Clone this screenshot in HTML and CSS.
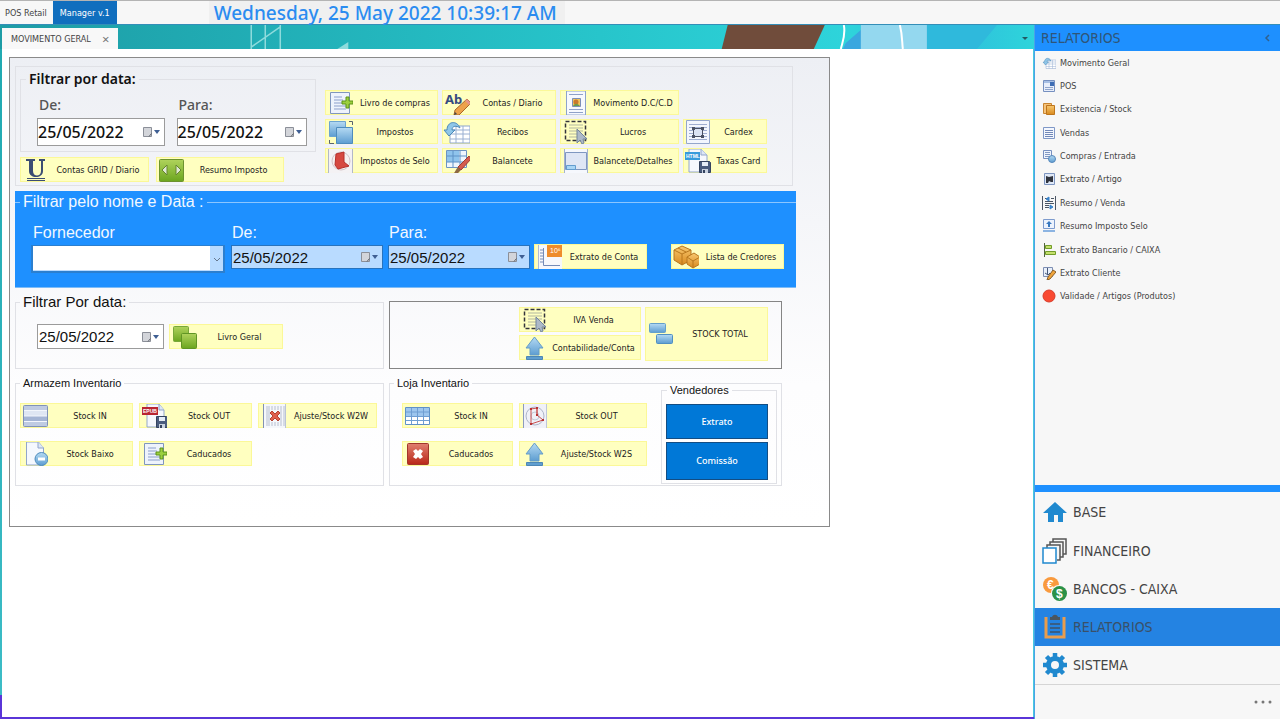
FILE: index.html
```html
<!DOCTYPE html>
<html lang="pt">
<head>
<meta charset="utf-8">
<title>Manager v.1 - Movimento Geral</title>
<link rel="stylesheet" href="styles.css">
</head>
<body>
<svg class="defs" aria-hidden="true">
  <defs>
    <linearGradient id="blue" x1="0" y1="0" x2="0" y2="1"><stop offset="0" stop-color="#b5daf3"/><stop offset="1" stop-color="#5d9dd1"/></linearGradient>
    <linearGradient id="green" x1="0" y1="0" x2="0" y2="1"><stop offset="0" stop-color="#b0d35c"/><stop offset="1" stop-color="#6ba51f"/></linearGradient>
    <linearGradient id="red" x1="0" y1="0" x2="0" y2="1"><stop offset="0" stop-color="#e0806f"/><stop offset="1" stop-color="#b92718"/></linearGradient>
    <linearGradient id="gold" x1="0" y1="0" x2="0" y2="1"><stop offset="0" stop-color="#f8c870"/><stop offset="1" stop-color="#d98a1e"/></linearGradient>
    <symbol id="calendar" viewBox="0 0 18 12"><path d="M1.500 1.500h8v9h-8z" fill="#d3d5da" stroke="#8b8f98"/><path d="M9.500 7.500L7 10.500" fill="none" stroke="#5f636b"/><path d="M12 4h6l-3 4z" fill="#3f5f93"/></symbol>
    <symbol id="docplus" viewBox="0 0 28 24"><path d="M5.500 1.500h19v21h-19z" fill="#eef3fc" stroke="#8096bd"/><path d="M9 6h8M9 9h9M9 12h9M9 15h12M9 18h12" stroke="#8c9fcb"/><path d="M21 6h3v4h4v3h-4v4h-3v-4h-4v-3h4z" fill="#9bcf3e" stroke="#5c9319"/></symbol>
    <symbol id="squares" viewBox="0 0 28 24"><path d="M4.500 1.500h16v15h-16z" fill="url(#blue)" stroke="#6ba4d0"/><path d="M11.500 7.500h16v16h-16z" fill="url(#blue)" stroke="#4e8cbe"/><path d="M24 1.500h3.500V5M4.500 20v3.500H9" fill="none" stroke="#59636f"/></symbol>
    <symbol id="redflag" viewBox="0 0 28 24"><path d="M3 0h25v24H3z" fill="#f4f2f4"/><path d="M3.500 0v24M27.500 0v24" stroke="#b2b8c8"/><circle cx="16" cy="12" r="9" fill="#f5efef" stroke="#d3c3c8"/><path d="M11 5l8-2v10l5 4-11 3-3-4z" fill="#d64840" stroke="#b52f2b"/></symbol>
    <symbol id="abpencil" viewBox="0 0 28 24"><text x="3" y="13" class="ab">Ab</text><path d="M25 8l4 4-12 12-5 0 1-5z" fill="#eda24b" stroke="#a9672a"/><path d="M25 8l4 4-2 2-4-4z" fill="#e4948a"/><path d="M12 24l1-3 2 2z" fill="#444"/></symbol>
    <symbol id="gridback" viewBox="0 0 28 24"><path d="M8 6h20v17H8z" fill="#fff" stroke="#8da5cc"/><path d="M8 10h20M8 14h20M8 19h20M14 6v17M21 6v17" stroke="#9ab0d2"/><path d="M18 8C15 0 5 1 5 10H2l5 6 6-6h-3c0-4 4-5 8-2z" fill="#8fc6e8" stroke="#4b88b8"/></symbol>
    <symbol id="gridbrush" viewBox="0 0 28 24"><path d="M4.500 1.500h20v17h-20z" fill="#eff6fd" stroke="#6c94c2"/><path d="M5 2h12v11H5z" fill="#8fc4ec"/><path d="M5 7h19M5 13h19M11 2v16M18 2v16" stroke="#5e92c6"/><path d="M27 7l2 3-10 11-3-3z" fill="#d45b4e" stroke="#a33a31"/><path d="M16 18l3 3-3 3h-4c1-1 2-4 4-6z" fill="#8c6844"/></symbol>
    <symbol id="docpic" viewBox="0 0 28 24"><path d="M6.500 0v24h19V0z" fill="#f7f9fe" stroke="#8da3cc"/><path d="M9 3.500h14M9 18.500h14M9 21.500h14" stroke="#8fa1c8"/><path d="M12.500 7.500h8v8h-8z" fill="#f0c45d" stroke="#7d8fb7"/><circle cx="16" cy="11" r="2.500" fill="#c9782c"/><path d="M13 15c2-3 4-3 7 0z" fill="#6a9a4f"/></symbol>
    <symbol id="select" viewBox="0 0 28 24"><path d="M9 5h14M9 8h14M9 11h14M9 14h9M9 17h9" stroke="#b2b79f"/><path d="M5.500 1.500h20v19h-20z" fill="none" stroke="#34343c" stroke-width="1.500" stroke-dasharray="4 2"/><path d="M17 9v14l3-3 2 4 2-1-1-4h4z" fill="#adb9c8" stroke="#73859b"/></symbol>
    <symbol id="window" viewBox="0 0 28 24"><path d="M4 0h24v24H4z" fill="#f6f8fd"/><path d="M5.500 3.500h21v17h-21z" fill="#dfe6f5" stroke="#7f97c0"/><path d="M6.500 16.500h9v4h-9z" fill="#a9d5f5" stroke="#639cce"/><path d="M4.500 0v24M27.500 0v24" stroke="#a3b2d0"/></symbol>
    <symbol id="frame" viewBox="0 0 28 24"><path d="M3.500.500h23v23h-23z" fill="#f3f6fd" stroke="#94a6cb"/><path d="M6 4.500h18M6 7.500h18M6 10.500h18M6 13.500h18M6 16.500h18M6 19.500h18" stroke="#9fadd0"/><path d="M10.500 8.500h9v8h-9z" fill="#dae2f3" stroke="#4a5164"/><path d="M9 7h3v3H9zM18 7h3v3h-3zM9 15h3v3H9zM18 15h3v3h-3z" fill="#4a5164"/></symbol>
    <symbol id="disk" viewBox="0 0 12 12"><path d="M.500.500h10l1 1v10H.500z" fill="#4a5c7e" stroke="#34435f"/><path d="M3 1h6v4H3z" fill="#e6edf7"/><path d="M3 8h6v4H3z" fill="#c9d2e0"/><path d="M4 9h2v3H4z" fill="#34435f"/></symbol>
    <symbol id="htmldisk" viewBox="0 0 28 24"><path d="M6 0h12l6 6v17H6z" fill="#f6f8fd" stroke="#93a7cb"/><path d="M18 0v6h6" fill="#dbe6f6" stroke="#93a7cb"/><path d="M2 3h15v8H2z" fill="#379bdc"/><text x="3" y="9" class="tag">HTML</text><use href="#disk" x="16" y="12" width="12" height="12"/></symbol>
    <symbol id="epubdisk" viewBox="0 0 28 24"><path d="M8 0h12l5 6v17H8z" fill="#f6f8fd" stroke="#93a7cb"/><path d="M20 0v6h5" fill="#dbe6f6" stroke="#93a7cb"/><path d="M3 3h16v8H3z" fill="#b92632"/><text x="4" y="9" class="tag">EPUB</text><use href="#disk" x="17" y="12" width="12" height="12"/></symbol>
    <symbol id="underline" viewBox="0 0 28 24"><path d="M6 1h9v2h-2v10c0 6 8 6 8 0V3h-2V1h6v2h-2v10c0 8-14 8-14 0V3H6z" fill="#3c4d73"/><path d="M7 20.500h18M7 22.500h18" stroke="#3c4d73"/></symbol>
    <symbol id="greenarrows" viewBox="0 0 28 24"><rect x="3.500" y="1.500" width="24" height="22" rx="1" fill="url(#green)" stroke="#6d922f"/><path d="M11 7v10l-5-5zM20 7v10l5-5z" fill="#dfe9d2" stroke="#66852f"/></symbol>
    <symbol id="chart" viewBox="0 0 28 24"><path d="M4 0h25v24H4z" fill="#f6f7fb"/><path d="M4.500 0v24" stroke="#aebbd5"/><path d="M9.500 3v17.500H26M6 5h4M6 8h4M6 11h4M6 14h4M6 17h4" fill="none" stroke="#758bb8"/><path d="M13 0h16v12H13z" fill="#ee8c2c"/><text x="16" y="8" class="ten">10⁶</text></symbol>
    <symbol id="boxes" viewBox="0 0 28 24"><path d="M3 5l8-4 9 4v10l-9 5-8-5z" fill="url(#gold)" stroke="#b8771d"/><path d="M3 5l8 4 9-4M11 9v11M7 3l8 4" fill="none" stroke="#b8771d"/><path d="M16 12l7-4 6 4v7l-7 4-6-4z" fill="url(#gold)" stroke="#b8771d"/><path d="M16 12l6 4 7-4M22 16v7" fill="none" stroke="#b8771d"/></symbol>
    <symbol id="greensquares" viewBox="0 0 28 24"><rect x="4.500" y="1.500" width="15" height="15" rx="1" fill="url(#green)" stroke="#78a83a"/><rect x="12.500" y="8.500" width="15" height="15" rx="1" fill="url(#green)" stroke="#609524"/></symbol>
    <symbol id="up" viewBox="0 0 28 24"><path d="M15.500 1l8.500 11h-4v7h-9v-7H7z" fill="url(#blue)" stroke="#659dc8"/><path d="M7.500 20.500h16v3h-16z" fill="#5f9ed0" stroke="#4d87b5"/></symbol>
    <symbol id="stocks" viewBox="0 0 28 24"><rect x="4.500" y="1.500" width="16" height="9" rx="1" fill="url(#blue)" stroke="#64a0cb"/><rect x="11.500" y="12.500" width="16" height="9" rx="1" fill="url(#blue)" stroke="#5090c2"/></symbol>
    <symbol id="rows" viewBox="0 0 28 24"><rect x="3.500" y="1.500" width="24" height="21" rx="1" fill="#bfcbe2" stroke="#8092b9"/><path d="M4 7h23v5H4z" fill="#dfe6f3"/><path d="M4 12h23v5H4z" fill="#a5b5d5"/><path d="M4 6.500h23M4 12h23M4 17.500h23" stroke="#f3f6fc"/></symbol>
    <symbol id="barcode" viewBox="0 0 28 24"><path d="M5 0h24v24H5z" fill="#f5f7fb"/><path d="M5.500 0v24M28 0v24" stroke="#8190b3"/><path d="M9 2v20M11 2v20M14 2v4M14 18v4M17 2v4M17 18v4M20 2v4M20 18v4M23 2v20M26 2v20" stroke="#b7bfd0"/><path d="M12 9l2-2 3 3 3-3 2 2-3 3 3 3-2 2-3-3-3 3-2-2 3-3z" fill="#df5f4d" stroke="#b84232"/></symbol>
    <symbol id="docminus" viewBox="0 0 28 24"><path d="M6.500 0h12l5 6v17h-17z" fill="#f5f8fe" stroke="#91a5cb"/><path d="M18 0v6h6" fill="#dde7f6" stroke="#91a5cb"/><circle cx="21.500" cy="17" r="6.500" fill="url(#blue)" stroke="#4e8cbd"/><path d="M18 15.500h7v3h-7z" fill="#fff"/></symbol>
    <symbol id="table" viewBox="0 0 28 24"><path d="M3.500 3.500h24v17h-24z" fill="#fff" stroke="#5f91c8"/><path d="M4 4h23v9H4z" fill="#9dc6ee"/><path d="M4 8h23M4 12.500h23M4 16.500h23M9.500 4v16M15.500 4v16M21.500 4v16" stroke="#6f9ed2"/></symbol>
    <symbol id="shape" viewBox="0 0 28 24"><path d="M4 0h25v24H4z" fill="#f0f1f8"/><path d="M4.500 0v24M28 0v24" stroke="#8c9abe"/><circle cx="16" cy="12" r="9" fill="none" stroke="#aeb6c9"/><circle cx="16" cy="12" r="4" fill="none" stroke="#c3cad8"/><path d="M12 5l6-1v7l6 5-12 4zM18 4v7" fill="none" stroke="#c95050"/><path d="M11 4h2v2h-2zM17 3h2v2h-2zM23 15h2v2h-2zM11 19h2v2h-2zM17 10h2v2h-2z" fill="#b83333"/></symbol>
    <symbol id="redx" viewBox="0 0 28 24"><rect x="5.500" y="1.500" width="21" height="21" rx="1" fill="url(#red)" stroke="#a1362b"/><path d="M11 9l3-2 2 2 2-2 3 2-2 3 2 3-3 2-2-2-2 2-3-2 2-3z" fill="#fff"/></symbol>
    <symbol id="s-pos" viewBox="0 0 14 14"><path d="M1.500 1.500h11v11h-11z" fill="#e8eefa" stroke="#7690c0"/><path d="M2 2h10v2H2z" fill="#a7bfe4"/><path d="M8 3h4v4H8z" fill="#3e6db5"/><path d="M3 8.500h8M3 10.500h8" stroke="#90a5cc"/></symbol>
    <symbol id="s-stock" viewBox="0 0 14 14"><path d="M1.500 1.500h8v10h-8z" fill="#f5c37b" stroke="#c98530"/><path d="M4.500 3.500h8v9h-8z" fill="url(#gold)" stroke="#bd751c"/></symbol>
    <symbol id="s-list" viewBox="0 0 14 14"><path d="M1.500 1.500h11v11h-11z" fill="#f4f7fe" stroke="#7f98c7"/><path d="M3 4.500h8M3 6.500h8M3 8.500h8M3 10.500h8" stroke="#7289b8"/></symbol>
    <symbol id="s-buy" viewBox="0 0 14 14"><path d="M1.500 1.500h8v8h-8z" fill="#eff4fd" stroke="#7890c0"/><path d="M3 3.500h5M3 5.500h5M3 7.500h5" stroke="#8299c4"/><circle cx="10" cy="10" r="3.500" fill="url(#blue)" stroke="#5687bb"/></symbol>
    <symbol id="s-item" viewBox="0 0 14 14"><path d="M2.500 1.500h10v11h-10z" fill="#dfe8f7" stroke="#7d95c0"/><path d="M4 4l3 1 4-1v6H9L7 9l-1 2H4z" fill="#30343e"/></symbol>
    <symbol id="s-resume" viewBox="0 0 14 14"><path d="M.500 0v14M13.500 0v14M3 2.500h3M9 2.500h3M3 5.500h8M3 7.500h9M3 9.500h4M3 11.500h4" stroke="#4b5564"/><path d="M4 3l3-2v4zM11 11l-3-2v4z" fill="#3a83ca" stroke="#3a83ca"/></symbol>
    <symbol id="s-tax" viewBox="0 0 14 14"><path d="M1.500.500h11v9h-11z" fill="#edf3fd" stroke="#7d9bcd"/><path d="M7 2l3 3H8v3H6V5H4z" fill="#3878bf"/><path d="M1 11h12v2H1z" fill="#8cb4e2"/></symbol>
    <symbol id="s-bank" viewBox="0 0 14 14"><path d="M2.500 0v14" stroke="#52653d"/><path d="M3.500 2.500h6v3h-6zM3.500 8.500h10v3h-10z" fill="#c4df6c" stroke="#729c29"/></symbol>
    <symbol id="s-client" viewBox="0 0 14 14"><path d="M1.500 1.500h9v9h-9z" fill="#e8effa" stroke="#7d8eb3"/><path d="M3 7l3 2 2-2M5.500 2v7" stroke="#475979" fill="none"/><path d="M11 4l3 2-6 7-3 1 1-3z" fill="#f0a43b" stroke="#875f2a"/></symbol>
    <symbol id="s-red" viewBox="0 0 14 14"><circle cx="7" cy="7" r="6" fill="#f94a32" stroke="#d83c2a"/></symbol>
    <symbol id="n-home" viewBox="0 0 26 26"><path d="M13 3l12 11h-4v9h-5v-7h-4v7H6v-9H1z" fill="#2089cf"/></symbol>
    <symbol id="n-pages" viewBox="0 0 26 26"><path d="M11 4V1h13v15h-3M8 7V4h13v15h-3M5 10V7h13v15h-3" fill="none" stroke="#555" stroke-width="1.500"/><path d="M1 10h13v15H1z" fill="#fff" stroke="#2089cf" stroke-width="1.500"/></symbol>
    <symbol id="n-coins" viewBox="0 0 26 26"><circle cx="9" cy="9" r="8" fill="#f99a3e"/><circle cx="17" cy="17" r="8" fill="#f7f7f7"/><circle cx="17.500" cy="17.500" r="7.500" fill="#2b9147"/><text x="5" y="13" class="coin">€</text><text x="14" y="22" class="coin">$</text></symbol>
    <symbol id="n-board" viewBox="0 0 26 26"><path d="M4 3v20h18V3" fill="none" stroke="#e99d4d" stroke-width="3"/><path d="M8 6V3h2c1-3 5-3 6 0h2v3z" fill="#4b5660"/><path d="M8 10h10M8 14h10M8 18h10" stroke="#3f5368" stroke-width="1.500"/></symbol>
    <symbol id="n-gear" viewBox="0 0 26 26"><circle cx="13" cy="13" r="6.500" fill="none" stroke="#2089cf" stroke-width="5"/><path d="M13 1v5M13 20v5M1 13h5M20 13h5M4.500 4.500L8 8M18 18l3.500 3.500M4.500 21.500L8 18M18 8l3.500-3.500" stroke="#2089cf" stroke-width="4.500"/></symbol>
  </defs>
</svg>

<header class="topbar">
  <button class="app-tab">POS Retail</button>
  <button class="app-tab app-tab-active">Manager v.1</button>
  <time class="clock">Wednesday, 25 May 2022 10:39:17 AM</time>
</header>

<div class="shell">
  <main class="workspace">
    <div class="tabstrip">
      <svg class="wallpaper" viewBox="0 0 1033 24" preserveAspectRatio="xMidYMid slice" aria-hidden="true">
        <path d="M251 0v24M265 0v24M280 0v24M251 22l29-20" stroke="#8edbdc" stroke-width="1.500" fill="none"/>
        <path d="M337 24l11-7v7z" fill="#8edbdc"/>
        <path d="M727 0h97l-11 24h-92z" fill="#704c3b"/>
        <path d="M842 24l3-6 15-13v-5h66v24z" fill="#3aa7df"/>
        <path d="M926 0h70l-20 24h-50z" fill="#2fb9dc"/>
        <path d="M860 0h66v24h-66z" fill="#94d8ef"/>
        <path d="M843 0c2 10-1 16-3 24M899 0c3 12 2 18 3 24" stroke="#fff" stroke-width="2" fill="none"/>
      </svg>
      <div class="doc-tab"><span>MOVIMENTO GERAL</span><button class="close" aria-label="Fechar">×</button></div>
      <button class="tab-menu" aria-label="Lista de separadores"><svg viewBox="0 0 6 4"><path d="M0 0h6L3 3z" fill="#235a63"/></svg></button>
    </div>
    <div class="document">
      <div class="panel">

        <section class="group top-group">
          <div class="top-left">
            <fieldset class="group date-filter">
              <legend>Filtrar por data:</legend>
              <div class="date-pair">
                <div class="field"><label for="d1">De:</label><span class="date"><input id="d1" value="25/05/2022"><svg class="cal"><use href="#calendar"/></svg></span></div>
                <div class="field"><label for="d2">Para:</label><span class="date"><input id="d2" value="25/05/2022"><svg class="cal"><use href="#calendar"/></svg></span></div>
              </div>
            </fieldset>
            <div class="under-filter">
              <button class="tool"><svg><use href="#underline"/></svg><span>Contas GRID / Diario</span></button>
              <button class="tool"><svg><use href="#greenarrows"/></svg><span>Resumo Imposto</span></button>
            </div>
          </div>
          <div class="report-grid">
            <button class="tool"><svg><use href="#docplus"/></svg><span>Livro de compras</span></button>
            <button class="tool"><svg><use href="#abpencil"/></svg><span>Contas / Diario</span></button>
            <button class="tool"><svg><use href="#docpic"/></svg><span>Movimento D.C/C.D</span></button>
            <span></span>
            <button class="tool"><svg><use href="#squares"/></svg><span>Impostos</span></button>
            <button class="tool"><svg><use href="#gridback"/></svg><span>Recibos</span></button>
            <button class="tool"><svg><use href="#select"/></svg><span>Lucros</span></button>
            <button class="tool"><svg><use href="#frame"/></svg><span>Cardex</span></button>
            <button class="tool"><svg><use href="#redflag"/></svg><span>Impostos de Selo</span></button>
            <button class="tool"><svg><use href="#gridbrush"/></svg><span>Balancete</span></button>
            <button class="tool"><svg><use href="#window"/></svg><span>Balancete/Detalhes</span></button>
            <button class="tool"><svg><use href="#htmldisk"/></svg><span>Taxas Card</span></button>
          </div>
        </section>

        <div class="supplier-band">
          <fieldset class="group supplier">
            <legend>Filtrar pelo nome e Data :</legend>
            <div class="supplier-row">
              <div class="field combo-field"><label for="sup">Fornecedor</label><span class="combo"><select id="sup"><option></option></select><svg viewBox="0 0 8 6"><path d="M1 1l3 3 3-3" fill="none" stroke="#66788f"/></svg></span></div>
              <div class="field"><label for="d3">De:</label><span class="date"><input id="d3" value="25/05/2022"><svg class="cal"><use href="#calendar"/></svg></span></div>
              <div class="field para"><label for="d4">Para:</label><span class="date"><input id="d4" value="25/05/2022"><svg class="cal"><use href="#calendar"/></svg></span></div>
              <button class="tool"><svg><use href="#chart"/></svg><span>Extrato de Conta</span></button>
              <button class="tool creditors"><svg><use href="#boxes"/></svg><span>Lista de Credores</span></button>
            </div>
          </fieldset>
        </div>

        <div class="halves middle">
          <fieldset class="group ledger">
            <legend>Filtrar Por data:</legend>
            <div class="ledger-row">
              <span class="date"><input aria-label="Data" value="25/05/2022"><svg class="cal"><use href="#calendar"/></svg></span>
              <button class="tool"><svg><use href="#greensquares"/></svg><span>Livro Geral</span></button>
            </div>
          </fieldset>
          <section class="totals">
            <div class="totals-stack">
              <button class="tool"><svg><use href="#select"/></svg><span>IVA Venda</span></button>
              <button class="tool"><svg><use href="#up"/></svg><span>Contabilidade/Conta</span></button>
            </div>
            <button class="tool tall"><svg><use href="#stocks"/></svg><span>STOCK TOTAL</span></button>
          </section>
        </div>

        <div class="halves stock">
          <fieldset class="group warehouse">
            <legend>Armazem Inventario</legend>
            <div class="warehouse-grid">
              <button class="tool"><svg><use href="#rows"/></svg><span>Stock IN</span></button>
              <button class="tool"><svg><use href="#epubdisk"/></svg><span>Stock OUT</span></button>
              <button class="tool"><svg><use href="#barcode"/></svg><span>Ajuste/Stock W2W</span></button>
              <button class="tool"><svg><use href="#docminus"/></svg><span>Stock Baixo</span></button>
              <button class="tool"><svg><use href="#docplus"/></svg><span>Caducados</span></button>
            </div>
          </fieldset>
          <fieldset class="group shop">
            <legend>Loja Inventario</legend>
            <div class="shop-row">
              <div class="shop-grid">
                <button class="tool"><svg><use href="#table"/></svg><span>Stock IN</span></button>
                <button class="tool"><svg><use href="#shape"/></svg><span>Stock OUT</span></button>
                <button class="tool"><svg><use href="#redx"/></svg><span>Caducados</span></button>
                <button class="tool"><svg><use href="#up"/></svg><span>Ajuste/Stock W2S</span></button>
              </div>
              <fieldset class="group sellers">
                <legend>Vendedores</legend>
                <button class="primary">Extrato</button>
                <button class="primary">Comissão</button>
              </fieldset>
            </div>
          </fieldset>
        </div>
      </div>
    </div>
  </main>

  <aside class="sidebar">
    <div class="side-head"><h2>RELATORIOS</h2><button aria-label="Recolher"><svg viewBox="0 0 6 8"><path d="M5 1L2 4l3 3" fill="none" stroke="#30618f" stroke-width="1.500"/></svg></button></div>
    <ul class="reports">
      <li><a href="#"><svg viewBox="0 0 28 24"><use href="#gridback"/></svg>Movimento Geral</a></li>
      <li><a href="#"><svg><use href="#s-pos"/></svg>POS</a></li>
      <li><a href="#"><svg><use href="#s-stock"/></svg>Existencia / Stock</a></li>
      <li><a href="#"><svg><use href="#s-list"/></svg>Vendas</a></li>
      <li><a href="#"><svg><use href="#s-buy"/></svg>Compras / Entrada</a></li>
      <li><a href="#"><svg><use href="#s-item"/></svg>Extrato / Artigo</a></li>
      <li><a href="#"><svg><use href="#s-resume"/></svg>Resumo / Venda</a></li>
      <li><a href="#"><svg><use href="#s-tax"/></svg>Resumo Imposto Selo</a></li>
      <li><a href="#"><svg><use href="#s-bank"/></svg>Extrato Bancario / CAIXA</a></li>
      <li><a href="#"><svg><use href="#s-client"/></svg>Extrato Cliente</a></li>
      <li><a href="#"><svg><use href="#s-red"/></svg>Validade / Artigos (Produtos)</a></li>
    </ul>
    <nav class="modules">
      <a href="#"><svg><use href="#n-home"/></svg>BASE</a>
      <a href="#"><svg><use href="#n-pages"/></svg>FINANCEIRO</a>
      <a href="#"><svg><use href="#n-coins"/></svg>BANCOS - CAIXA</a>
      <a href="#" class="current"><svg><use href="#n-board"/></svg>RELATORIOS</a>
      <a href="#"><svg><use href="#n-gear"/></svg>SISTEMA</a>
    </nav>
    <footer class="side-foot"><button aria-label="Mais opções"><svg viewBox="0 0 18 4"><g fill="#777"><circle cx="2" cy="2" r="1.500"/><circle cx="9" cy="2" r="1.500"/><circle cx="16" cy="2" r="1.500"/></g></svg></button></footer>
  </aside>
</div>
</body>
</html>
```
FILE: styles.css
```css
* { box-sizing: border-box; }
body {
  margin: 0;
  min-height: 100vh;
  display: flex;
  flex-direction: column;
  background: #f7f7f7;
  color: #111;
  font: 9px/12px "DejaVu Sans Condensed", "Noto Sans", sans-serif;
}
button, input, select { font: inherit; color: inherit; margin: 0; }
button { border: 0; padding: 0; background: none; }
svg { display: block; flex: none; overflow: visible; }
.defs { position: absolute; width: 0; height: 0; }
fieldset { margin: 0; padding: 0; min-width: 0; }
legend { padding: 0 3px; }
h2 { margin: 0; font-weight: 400; }
a { color: inherit; text-decoration: none; }
.ab { font: bold 13px "Noto Sans", sans-serif; fill: #354a80; }
.tag { font: bold 5px "Liberation Sans", sans-serif; fill: #fff; }
.ten { font: 7px "Liberation Sans", sans-serif; fill: #fff; }
.coin { font: bold 12px "Liberation Sans", sans-serif; fill: #fff; }

.topbar {
  display: flex;
  height: 25px;
  border-top: 1px solid #b4b4b4;
  border-bottom: 1px solid #348eb8;
}
.app-tab { padding: 0 5px; color: #444; }
.app-tab-active { margin-left: 1px; padding: 0 7px; background: #106ebe; color: #fff; }
.clock {
  margin-left: 92px;
  padding: 0 8px 0 5px;
  background: #f0f0f0;
  color: #2b8cf0;
  font: 500 19px/24px "Noto Sans", sans-serif;
}

.shell { flex: 1; display: flex; }
.workspace {
  flex: 1;
  min-width: 0;
  display: flex;
  flex-direction: column;
  background: linear-gradient(#20a9b0, #3cbcc6 670px, #5a35d8 670px);
  padding: 0 0 2px 2px;
}
.tabstrip {
  position: relative;
  display: flex;
  height: 24px;
  margin-left: -2px;
  padding: 3px 0 0 2px;
  overflow: hidden;
  background: linear-gradient(90deg, #1d9ca5, #27c5cb 600px, #2ed4db 850px, #2fb9dc 930px, #2ed4db);
}
.wallpaper { position: absolute; inset: 0; width: 100%; height: 100%; }
.doc-tab {
  position: relative;
  display: flex;
  align-items: center;
  gap: 11px;
  padding: 0 9px;
  background: #f8f8f8;
  color: #444;
}
.close { color: #777; font: 13px/12px "Noto Sans", sans-serif; }
.tab-menu { position: relative; margin-left: auto; padding: 0 6px; }
.tab-menu svg { width: 6px; height: 4px; }
.document { flex: 1; padding: 8px 7px; background: #fff; border-right: 1px solid #48c8e0; }
.panel {
  max-width: 821px;
  padding: 8px 32px 40px 5px;
  border: 1px solid #8a8a8a;
  background: linear-gradient(#edeff4, #fdfdfe 70%, #fff);
}
.group { border: 1px solid #e0e1e6; }

.tool {
  display: flex;
  align-items: center;
  min-width: 0;
  height: 25px;
  border: 1px solid #fbf898;
  background: #ffffc0;
  color: #222;
  white-space: nowrap;
}
.tool svg { width: 28px; height: 24px; margin-left: -1px; }
.tool span { flex: 1; text-align: center; }

.field { display: flex; flex-direction: column; }
.date {
  display: flex;
  align-items: center;
  border: 1px solid #9b9b9b;
  background: #fff;
  color: #111;
  font: 15px/20px "Liberation Sans", sans-serif;
}
.date input { flex: 1; min-width: 0; width: 0; height: 22px; padding: 0 1px; border: 0; background: none; outline: 0; }
.cal { width: 18px; height: 12px; margin-right: 4px; }

.top-group { display: flex; gap: 9px; max-width: 778px; padding: 2px 4px 3px; }
.top-left { width: 296px; }
.date-filter { padding: 0 8px 5px 16px; }
.date-filter legend { margin-left: -11px; font: 600 14px/20px "Noto Sans", sans-serif; }
.date-pair { display: flex; gap: 12px; }
.date-pair .field { width: 128px; }
.date-pair .field + .field { width: 131px; }
.date-pair label { padding-left: 2px; color: #555; font: 500 14px/20px "Noto Sans", sans-serif; margin: 6px 0 3px; }
.date-pair .date { height: 28px; font: 500 16px/22px "Noto Sans", sans-serif; }
.date-pair input { padding: 0; }
.under-filter { display: flex; gap: 7px; padding-top: 5px; }
.under-filter .tool { width: 129px; }
.under-filter .tool + .tool { width: 128px; }
.report-grid {
  display: grid;
  grid-template-columns: 113px 114px 119px 84px;
  gap: 4px;
  align-content: start;
  padding-top: 21px;
}

.supplier-band { max-width: 781px; margin: 5px 0 4px; background: #1e90ff; border-bottom: 1px solid #7dbcf7; }
.supplier { border: 0; border-top: 1px solid #8cc6ff; color: #f2f8ff; padding: 0 12px 18px 16px; }
.supplier legend { margin-left: -11px; font: 16px/22px "Liberation Sans", sans-serif; }
.supplier-row { display: flex; align-items: flex-end; gap: 6px; padding-top: 10px; }
.supplier .field { width: 152px; }
.supplier .combo-field { width: 194px; align-self: stretch; }
.supplier .para { width: 142px; margin-left: -1px; }
.supplier label { padding: 0 1px 0 2px; font: 16px/20px "Liberation Sans", sans-serif; }
.supplier .field:not(.combo-field) label { padding: 0 1px 2px; }
.supplier .date { height: 24px; border-color: #2873bd; background: #b9dbff; }
.supplier .tool { width: 113px; margin-left: -2px; }
.supplier .creditors { margin-left: 18px; }
.combo { position: relative; display: block; height: 28px; margin: 2px 0 -4px; border: 2px solid #2b7fcf; border-width: 1px 2px 2px; background: #b9dbff; }
.combo select { appearance: none; display: block; width: 177px; height: 24px; border: 0; border-radius: 0; background: #fff; }
.combo svg { position: absolute; right: 2px; top: 11px; width: 8px; height: 6px; }

.halves { display: grid; grid-template-columns: 369px 393px; gap: 5px; }
.ledger { padding: 0 20px 19px; }
.ledger legend { margin-left: -16px; font: 15px/20px "Liberation Sans", sans-serif; }
.ledger-row { display: flex; gap: 5px; padding: 12px 0 0 1px; }
.ledger .date { width: 127px; height: 25px; }
.ledger .tool { width: 114px; }
.totals { display: flex; justify-content: flex-end; gap: 4px; margin-top: 9px; padding: 5px 13px; border: 1px solid #858585; }
.totals-stack { display: flex; flex-direction: column; gap: 3px; width: 122px; }
.totals .tall { width: 123px; height: 54px; }

.stock { margin-top: 7px; }
.stock legend { margin-left: 4px; font: 11px/14px "Liberation Sans", sans-serif; }
.warehouse-grid { display: grid; grid-template-columns: 113px 113px 119px; gap: 13px 6px; padding: 13px 4px 19px; }
.shop-row { display: flex; justify-content: space-between; padding-right: 4px; }
.shop-grid { display: grid; grid-template-columns: 111px 128px; gap: 13px 6px; align-content: start; padding: 13px 0 0 12px; }
.sellers { display: flex; flex-direction: column; gap: 2px; width: 116px; margin-top: -7px; padding: 7px 8px 3px 4px; align-self: start; }
.sellers legend { margin-left: 1px; }
.primary { display: block; width: 102px; height: 35px; border: 1px solid #134d83; background: #0078d7; color: #fff; font: 500 9px/14px "Noto Sans", sans-serif; }
.sellers .primary + .primary { height: 38px; margin-top: 1px; }

.sidebar { width: 246px; display: flex; flex-direction: column; border-left: 1px solid #4ba3e6; color: #444; }
.side-head { display: flex; align-items: center; justify-content: space-between; height: 26px; padding: 0 10px 0 6px; background: #1e90ff; }
.side-head h2 { color: #2f5577; font-size: 14px; line-height: 20px; }
.side-head svg { width: 6px; height: 8px; }
.reports { display: grid; grid-auto-rows: 1fr; height: 257px; margin: 0; padding: 0; list-style: none; }
.reports a { display: flex; align-items: center; gap: 4px; height: 100%; padding-left: 7px; }
.reports svg { width: 14px; height: 14px; }
.modules { margin-top: auto; border-top: 7px solid #1e90ff; border-bottom: 1px solid #d5d5d5; font-size: 14px; line-height: 20px; }
.modules a { display: flex; align-items: center; gap: 5px; height: 38px; padding-left: 7px; }
.modules a:first-child { height: 40px; }
.modules svg { width: 26px; height: 26px; }
.modules .current { background: #2483e2; color: #3a5068; }
.side-foot { display: flex; justify-content: flex-end; align-items: center; height: 34px; padding-right: 8px; }
.side-foot svg { width: 18px; height: 4px; }
```
